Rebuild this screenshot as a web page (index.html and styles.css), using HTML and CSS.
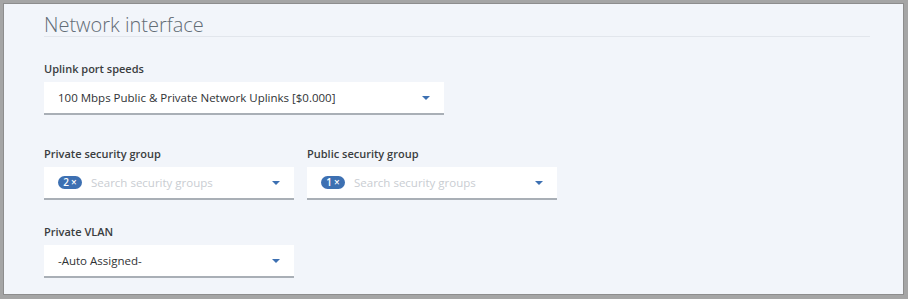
FILE: index.html
```html
<!DOCTYPE html>
<html lang="en">
<head>
    <meta charset="UTF-8">
    <meta name="viewport" content="width=device-width, initial-scale=1.0">
    <title>Network interface</title>
    <link rel="stylesheet" href="styles.css">
</head>
<body>
    <div class="frame">
        <div class="panel">
            <h2 class="section-title">Network interface</h2>

            <div class="field field-first">
                <label class="field-label">Uplink port speeds</label>
                <div class="select select-wide">
                    <span class="select-value">100 Mbps Public &amp; Private Network Uplinks [$0.000]</span>
                    <span class="caret"></span>
                </div>
            </div>

            <div class="row">
                <div class="field">
                    <label class="field-label">Private security group</label>
                    <div class="select">
                        <span class="tag">2 <span class="tag-x">×</span></span>
                        <span class="placeholder">Search security groups</span>
                        <span class="caret"></span>
                    </div>
                </div>
                <div class="field">
                    <label class="field-label">Public security group</label>
                    <div class="select">
                        <span class="tag">1 <span class="tag-x">×</span></span>
                        <span class="placeholder">Search security groups</span>
                        <span class="caret"></span>
                    </div>
                </div>
            </div>

            <div class="field">
                <label class="field-label">Private VLAN</label>
                <div class="select">
                    <span class="select-value">-Auto Assigned-</span>
                    <span class="caret"></span>
                </div>
            </div>
        </div>
    </div>
</body>
</html>
```

FILE: styles.css
```css
* {
    box-sizing: border-box;
}

body {
    margin: 0;
    background: #a4a4a4;
    font-family: "Open Sans", "Noto Sans", sans-serif;
}

.frame {
    width: 908px;
    height: 299px;
    border: 3px solid #a5a5a5;
    border-right-width: 4px;
    border-bottom-width: 4px;
}

.panel {
    height: 100%;
    background: #f2f5fa;
    border: 1px solid #8d8d8d;
    padding: 10px 33px 0 40px;
}

.section-title {
    margin: 0 0 24px 0;
    padding: 0;
    font-size: 20px;
    line-height: 22px;
    font-weight: 300;
    color: #626c75;
    border-bottom: 1px solid #e2e6ec;
}

.field {
    display: flex;
    flex-direction: column;
    width: 250px;
}

.field-first {
    width: 400px;
    margin-bottom: 31px;
}

.row {
    display: flex;
    gap: 13px;
    margin-bottom: 24px;
}

.field-label {
    font-size: 11px;
    line-height: 16px;
    font-weight: 600;
    color: #3a3d40;
    margin-bottom: 5px;
}

.select {
    display: flex;
    align-items: center;
    height: 33px;
    padding: 0 14px;
    background: #fff;
    border-bottom: 2px solid #a9afb6;
    font-size: 11.5px;
    color: #2f3235;
}

.select-value {
    flex: 1;
}

.placeholder {
    flex: 1;
    margin-left: 9px;
    color: #c9cdd2;
}

.tag {
    display: inline-flex;
    align-items: center;
    justify-content: center;
    width: 24px;
    height: 13px;
    border-radius: 7px;
    background: #3d70b2;
    color: #fff;
    font-size: 10px;
    font-weight: 600;
    line-height: 13px;
}

.tag-x {
    margin-left: 2px;
    font-size: 10px;
}

.caret {
    width: 0;
    height: 0;
    border-left: 4px solid transparent;
    border-right: 4px solid transparent;
    border-top: 4px solid #3d70b2;
}
```
